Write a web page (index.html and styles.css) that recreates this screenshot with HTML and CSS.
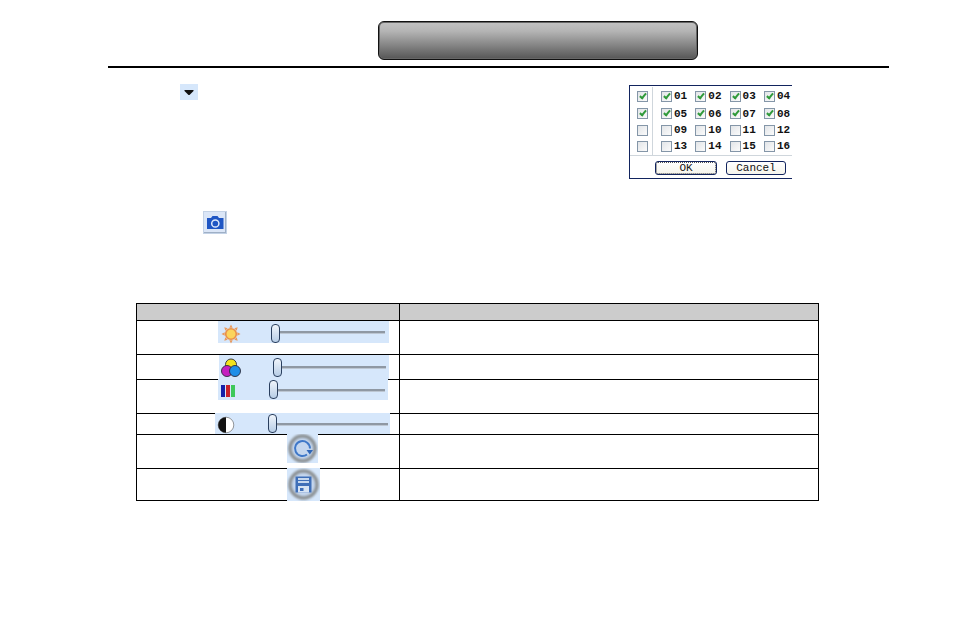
FILE: index.html
```html
<!DOCTYPE html>
<html lang="en">
<head>
    <meta charset="UTF-8" />
    <title>Preview settings</title>
    <link rel="stylesheet" href="styles.css">
</head>
<body>
    <div class="banner"></div>
    <hr class="rule" />

    <div class="top-section">
        <div class="left-icons">
            <div class="dropdown-btn">
                <svg width="18" height="16" viewBox="0 0 18 16"><path d="M4.500 6h9v1L9.500 11h-1L4.500 7z" fill="#111"/></svg>
            </div>
            <div class="camera-btn">
                <svg width="24" height="23" viewBox="0 0 24 23"><path d="M4 7h4l1.500-2h5L16 7h4.500v11H4z" fill="#1f56c4"/><circle cx="12.300" cy="12.500" r="3.600" fill="#1f56c4" stroke="#dfe9fb" stroke-width="1.500"/></svg>
            </div>
        </div>

        <div class="channel-panel">
            <div class="channel-upper">
                <div class="row-checks">
                    <span class="cb on"></span>
                    <span class="cb on"></span>
                    <span class="cb"></span>
                    <span class="cb"></span>
                </div>
                <div class="channel-grid">
                    <label class="ch"><span class="cb on"></span>01</label>
                    <label class="ch"><span class="cb on"></span>02</label>
                    <label class="ch"><span class="cb on"></span>03</label>
                    <label class="ch"><span class="cb on"></span>04</label>
                    <label class="ch"><span class="cb on"></span>05</label>
                    <label class="ch"><span class="cb on"></span>06</label>
                    <label class="ch"><span class="cb on"></span>07</label>
                    <label class="ch"><span class="cb on"></span>08</label>
                    <label class="ch"><span class="cb"></span>09</label>
                    <label class="ch"><span class="cb"></span>10</label>
                    <label class="ch"><span class="cb"></span>11</label>
                    <label class="ch"><span class="cb"></span>12</label>
                    <label class="ch"><span class="cb"></span>13</label>
                    <label class="ch"><span class="cb"></span>14</label>
                    <label class="ch"><span class="cb"></span>15</label>
                    <label class="ch"><span class="cb"></span>16</label>
                </div>
            </div>
            <div class="channel-buttons">
                <button class="btn btn-ok">OK</button>
                <button class="btn btn-cancel">Cancel</button>
            </div>
        </div>
    </div>

    <div class="table-wrap">
        <table class="param-table">
            <colgroup><col class="col-a" /><col /></colgroup>
            <tr class="r-head"><th></th><th></th></tr>
            <tr class="r-1"><td></td><td></td></tr>
            <tr class="r-2"><td></td><td></td></tr>
            <tr class="r-3"><td></td><td></td></tr>
            <tr class="r-4"><td></td><td></td></tr>
            <tr class="r-5"><td></td><td></td></tr>
            <tr class="r-6"><td></td><td></td></tr>
        </table>

        <!-- these sit on top of the table lines -->
        <div class="slider s-bright">
            <svg class="s-icon" width="20" height="20" viewBox="0 0 20 20">
                <g fill="#e9995c">
                    <path d="M10 .5l1.700 3.200h-3.400zM10 19.500l1.700-3.200h-3.400zM.5 10l3.200-1.700v3.400zM19.500 10l-3.200-1.700v3.400zM3.300 3.300l3.400 1-2.400 2.400zM16.700 16.700l-3.400-1 2.400-2.400zM3.300 16.700l1-3.400 2.400 2.400zM16.700 3.300l-1 3.400-2.400-2.400z"/>
                </g>
                <circle cx="10" cy="10" r="5.300" fill="#fbd45c" stroke="#e98f48" stroke-width="1.600"/>
            </svg>
            <span class="thumb"></span><span class="track"></span>
        </div>
        <div class="slider s-color">
            <svg class="s-icon" width="20" height="20" viewBox="0 0 20 20">
                <circle cx="10" cy="6.500" r="5.500" fill="#f2e21c" stroke="#2a2a3a" stroke-width=".9"/>
                <circle cx="6" cy="13" r="5.500" fill="#c51fc0" stroke="#2a2a3a" stroke-width=".9"/>
                <circle cx="14" cy="13" r="5.500" fill="#1f8fe8" stroke="#2a2a3a" stroke-width=".9"/>
            </svg>
            <span class="thumb"></span><span class="track"></span>
        </div>
        <div class="slider s-sat">
            <svg class="s-icon" width="16" height="14" viewBox="0 0 16 14">
                <rect x="1" y="1" width="4" height="12" fill="#1620a8"/>
                <rect x="6" y="1" width="4" height="12" fill="#c8202a"/>
                <rect x="11" y="1" width="4" height="12" fill="#3cc85a"/>
            </svg>
            <span class="thumb"></span><span class="track"></span>
        </div>
        <div class="slider s-contrast">
            <svg class="s-icon" width="18" height="18" viewBox="0 0 18 18">
                <circle cx="9" cy="9" r="7.800" fill="#fff" stroke="#555" stroke-width=".6"/>
                <path d="M9 1.200a7.800 7.800 0 0 0 0 15.600z" fill="#111"/>
            </svg>
            <span class="thumb"></span><span class="track"></span>
        </div>

        <div class="round-btn b-refresh">
            <svg width="31" height="29" viewBox="0 0 31 29">
                <circle class="ring" cx="15.500" cy="14.500" r="12.500"/>
                <path d="M20 20.500a7.500 7.500 0 1 1 3-6" fill="none" stroke="#3f78c8" stroke-width="2"/>
                <path d="M19.500 16h6.500l-3.200 4.500z" fill="#2f66b8"/>
            </svg>
        </div>
        <div class="round-btn b-save">
            <svg width="33" height="33" viewBox="0 0 33 33">
                <circle class="ring" cx="16.500" cy="16.500" r="13.500"/>
                <path d="M8.500 8.500h16v16h-16z" fill="#3f6fb8"/>
                <path d="M11 10h11v2h-11zM11 13h11v2h-11z" fill="#c6d8ef"/>
                <path d="M11 18h11v6.500h-11z" fill="#d6e3f4"/>
                <path d="M13 20h3.500v3h-3.500z" fill="#3f6fb8"/>
            </svg>
        </div>
    </div>
</body>
</html>
```

FILE: styles.css
```css
/* Page */
body {
    margin: 0;
    background: #ffffff;
    font-family: "Liberation Mono", monospace;
    color: #111;
}

/* Header */
.banner {
    width: 320px;
    height: 39px;
    margin: 21px 0 0 378px;
    box-sizing: border-box;
    border: 1px solid #111;
    border-radius: 6px;
    box-shadow: inset 0 0 0 1px #666;
    background: linear-gradient(#c2c2c2, #b4b4b4 25%, #565656);
}

.rule {
    width: 781px;
    height: 2px;
    margin: 6px 0 0 108px;
    border: none;
    background: #000;
}

/* Top section */
.top-section {
    display: flex;
    justify-content: space-between;
    padding: 0 163px 0 180px;
}

.left-icons {
    padding-top: 16px;
}

.dropdown-btn {
    width: 18px;
    height: 16px;
    background: #d6e7fb;
}

.camera-btn {
    width: 24px;
    height: 23px;
    margin: 111px 0 0 23px;
    background: #dbe6f7;
    box-shadow: inset 0 0 0 1px #c3d2e6, inset -1px -1px 0 1px #9fb0c6;
}

/* Channel picker */
.channel-panel {
    width: 163px;
    height: 94px;
    margin-top: 17px;
    box-sizing: border-box;
    border: 1px solid #12245e;
    border-right: none;
}

.channel-upper {
    display: flex;
    height: 70px;
    padding-top: 1px;
    box-sizing: border-box;
    border-bottom: 1px solid #cfd6dc;
}

.row-checks {
    display: grid;
    grid-template-rows: 18px 17px 16px 16px;
    align-items: center;
    flex: none;
    width: 23px;
    padding-left: 7px;
    box-sizing: border-box;
    border-right: 1px solid #cfd6dc;
}

.channel-grid {
    display: grid;
    grid-template-columns: repeat(4, 34.300px);
    grid-template-rows: 18px 17px 16px 16px;
    align-items: center;
    padding-left: 8px;
}

.ch {
    display: flex;
    align-items: center;
    gap: 2px;
    font-size: 11px;
    font-weight: bold;
}

.cb {
    display: block;
    position: relative;
    width: 9px;
    height: 9px;
    border: 1px solid #8496a8;
    background: linear-gradient(135deg, #e2e5e8, #fbfbfb);
}

.cb.on::after {
    content: "";
    position: absolute;
    left: 3px;
    top: 0;
    width: 2px;
    height: 5px;
    border: solid #2f9a3a;
    border-width: 0 2px 2px 0;
    transform: rotate(40deg);
}

.channel-buttons {
    display: flex;
    gap: 9px;
    padding: 5px 0 0 25px;
}

.btn {
    height: 14px;
    padding: 0;
    border: 1px solid #12245e;
    border-radius: 3px;
    background: linear-gradient(#ffffff, #f5f4ec);
    font-family: "Liberation Mono", monospace;
    font-size: 11px;
    line-height: 12px;
    color: #111;
}

.btn-ok {
    width: 62px;
    outline: 1px dotted #555;
    outline-offset: -2px;
}

.btn-cancel {
    width: 60px;
}

/* Parameter table */
.table-wrap {
    position: relative;
    margin: 69px 0 0 136px;
    width: 683px;
}

.param-table {
    width: 683px;
    table-layout: fixed;
    border-collapse: collapse;
}

.col-a {
    width: 263px;
}

.param-table th,
.param-table td {
    padding: 0;
    border: 1px solid #000;
}

.param-table th {
    background: #cccccc;
}

.r-head { height: 17px; }
.r-1 { height: 34px; }
.r-2 { height: 25px; }
.r-3 { height: 34px; }
.r-4 { height: 21px; }
.r-5 { height: 34px; }
.r-6 { height: 32px; }

/* Sliders and buttons pasted over the table */
.slider {
    position: absolute;
    display: flex;
    align-items: center;
    box-sizing: border-box;
    background: #d6e7fb;
}

.s-icon {
    position: absolute;
}

.thumb {
    flex: none;
    width: 7px;
    height: 17px;
    border: 1px solid #2a3f5e;
    border-radius: 4px;
    background: linear-gradient(#f0f5fb, #b7cde6);
}

.track {
    flex: 1;
    height: 2px;
    background: #8f98a3;
    box-shadow: 0 1px 0 #bcc6d2;
}

.s-bright { left: 82px; top: 18px; width: 171px; height: 22px; padding: 0 4px 0 53px; }
.s-bright .s-icon { left: 3px; top: 3px; }
.s-bright .thumb { margin-top: 3px; }

.s-color { left: 83px; top: 52px; width: 170px; height: 24px; padding: 0 3px 0 54px; }
.s-color .s-icon { left: 2px; top: 3px; }

.s-sat { left: 82px; top: 76px; width: 170px; height: 21px; padding: 0 3px 0 51px; }
.s-sat .s-icon { left: 2px; top: 5px; }

.s-contrast { left: 79px; top: 110px; width: 175px; height: 21px; padding: 0 2px 0 53px; }
.s-contrast .s-icon { left: 2px; top: 3px; }

.round-btn {
    position: absolute;
    background: #d6e7fb;
    line-height: 0;
}

.ring {
    fill: #c4d6ee;
    stroke: #8c9194;
    stroke-width: 3.500px;
    filter: blur(0.8px);
}

.b-refresh { left: 151px; top: 131px; width: 31px; height: 29px; }
.b-save { left: 151px; top: 165px; width: 33px; height: 33px; }
```
